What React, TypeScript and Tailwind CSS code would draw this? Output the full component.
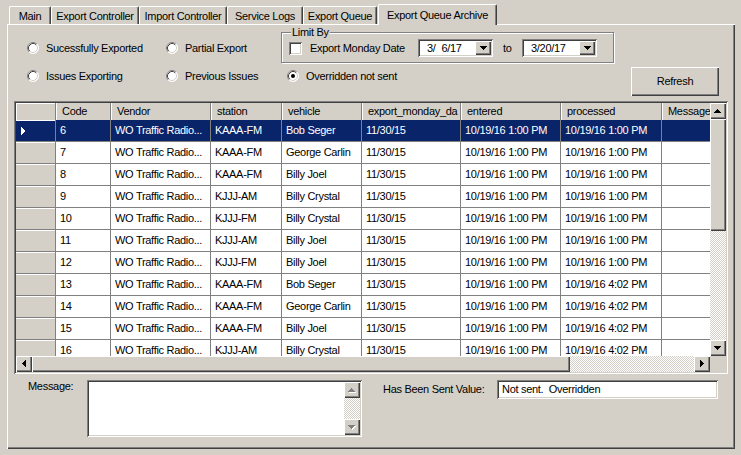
import React from "react";

const RAISED = "shadow-[inset_1px_1px_#ffffff,inset_-1px_-1px_#404040,inset_-2px_-2px_#808080]";
const SUNKEN = "shadow-[inset_1px_1px_#808080,inset_-1px_-1px_#ffffff,inset_2px_2px_#404040,inset_-2px_-2px_#d4d0c8]";
const DITHER = "bg-[image:repeating-conic-gradient(#ffffff_0%_25%,#d4d0c8_0%_50%)] bg-[length:2px_2px]";

const tabs = [
  { label: "Main", w: "w-[42px]" },
  { label: "Export Controller", w: "w-[88px]" },
  { label: "Import Controller", w: "w-[88px]" },
  { label: "Service Logs", w: "w-[76px]" },
  { label: "Export Queue", w: "w-[74px]" },
];

const cols = [
  { key: "code", label: "Code", w: "w-[55px]" },
  { key: "vendor", label: "Vendor", w: "w-[100px]" },
  { key: "station", label: "station", w: "w-[71px]" },
  { key: "vehicle", label: "vehicle", w: "w-[80px]" },
  { key: "monday", label: "export_monday_da", w: "w-[99px]" },
  { key: "entered", label: "entered", w: "w-[100px]" },
  { key: "processed", label: "processed", w: "w-[101px]" },
  { key: "message", label: "Message", w: "w-[90px]" },
];

type Row = Record<string, string>;

const mk = (code: string, station: string, vehicle: string, processed: string): Row => ({
  code,
  vendor: "WO Traffic Radio...",
  station,
  vehicle,
  monday: "11/30/15",
  entered: "10/19/16 1:00 PM",
  processed: `10/19/16 ${processed}`,
  message: "",
});

const rows: Row[] = [
  mk("6", "KAAA-FM", "Bob Seger", "1:00 PM"),
  mk("7", "KAAA-FM", "George Carlin", "1:00 PM"),
  mk("8", "KAAA-FM", "Billy Joel", "1:00 PM"),
  mk("9", "KJJJ-AM", "Billy Crystal", "1:00 PM"),
  mk("10", "KJJJ-FM", "Billy Crystal", "1:00 PM"),
  mk("11", "KJJJ-AM", "Billy Joel", "1:00 PM"),
  mk("12", "KJJJ-FM", "Billy Joel", "1:00 PM"),
  mk("13", "KAAA-FM", "Bob Seger", "4:02 PM"),
  mk("14", "KAAA-FM", "George Carlin", "4:02 PM"),
  mk("15", "KAAA-FM", "Billy Joel", "4:02 PM"),
  mk("16", "KJJJ-AM", "Billy Crystal", "4:02 PM"),
];

function Radio({ label, checked, w }: { label: string; checked?: boolean; w?: string }) {
  return (
    <div className={`flex items-center gap-[7px] h-[12px] ${w ?? ""}`}>
      <svg width="12" height="12" viewBox="0 0 12 12" className="shrink-0">
        <circle cx="6" cy="6" r="5.5" fill="#ffffff" />
        <path d="M2.11 9.89A5.5 5.5 0 0 1 9.89 2.11" stroke="#808080" fill="none" />
        <path d="M9.89 2.11A5.5 5.5 0 0 1 2.11 9.89" stroke="#ffffff" fill="none" />
        <path d="M2.82 9.18A4.5 4.5 0 0 1 9.18 2.82" stroke="#404040" fill="none" />
        <path d="M9.18 2.82A4.5 4.5 0 0 1 2.82 9.18" stroke="#d4d0c8" fill="none" />
        {checked && <circle cx="6" cy="6" r="2" fill="#000000" />}
      </svg>
      <span className="whitespace-nowrap">{label}</span>
    </div>
  );
}

function Arrow({ dir, disabled }: { dir: "up" | "down" | "left" | "right"; disabled?: boolean }) {
  const pts = {
    up: "3.5,0 7,4 0,4",
    down: "0,0 7,0 3.5,4",
    left: "4,0 4,7 0,3.5",
    right: "0,0 0,7 4,3.5",
  }[dir];
  const vertical = dir === "up" || dir === "down";
  return (
    <div className={`w-[16px] h-[16px] shrink-0 bg-[#d4d0c8] ${RAISED} flex items-center justify-center`}>
      <svg width={vertical ? 8 : 5} height={vertical ? 5 : 8} viewBox={vertical ? "0 0 8 5" : "0 0 5 8"} shapeRendering="crispEdges">
        {disabled && <polygon points={pts} fill="#ffffff" transform="translate(1,1)" />}
        <polygon points={pts} fill={disabled ? "#808080" : "#000000"} />
      </svg>
    </div>
  );
}

function DateBox({ value }: { value: string }) {
  return (
    <div className={`w-[75px] h-[18px] p-[2px] bg-white ${SUNKEN} flex shrink-0`}>
      <span className="flex-1 pl-[7px] flex items-center whitespace-pre">{value}</span>
      <div className={`w-[16px] h-[14px] bg-[#d4d0c8] ${RAISED} flex items-center justify-center`}>
        <svg width="7" height="4" viewBox="0 0 7 4" shapeRendering="crispEdges">
          <polygon points="0,0 7,0 3.5,4" fill="#000000" />
        </svg>
      </div>
    </div>
  );
}

function Tabs() {
  return (
    <div className="flex items-end h-[24px] pl-[9px]">
      {tabs.map((t) => (
        <div
          key={t.label}
          className={`${t.w} h-[18px] pt-[1px] shrink-0 flex items-center justify-center border-t border-l border-white border-r border-r-[#404040] rounded-tl-[2px] rounded-tr-[2px] shadow-[inset_-1px_0_#808080] whitespace-nowrap`}
        >
          {t.label}
        </div>
      ))}
      <div className="relative z-10 ml-[1px] -mb-[1px] w-[119px] h-[21px] shrink-0 bg-[#d4d0c8] flex items-center justify-center border-t border-l border-white border-r border-r-[#404040] rounded-tl-[2px] rounded-tr-[2px] shadow-[inset_-1px_0_#808080] whitespace-nowrap">
        Export Queue Archive
      </div>
    </div>
  );
}

function Grid() {
  return (
    <div className={`ml-[6px] w-[714px] h-[273px] p-[2px] ${SUNKEN} flex flex-col`}>
      <div className="flex h-[253px]">
        <div className="w-[694px] overflow-hidden bg-white">
          <div className="flex h-[17px] bg-[#d4d0c8]">
            <div className="w-[40px] shrink-0 border-r border-[#808080] shadow-[inset_1px_1px_#ffffff]" />
            {cols.map((c) => (
              <div
                key={c.key}
                className={`${c.w} shrink-0 pl-[6px] flex items-center border-r border-[#808080] shadow-[inset_1px_0_#ffffff] overflow-hidden whitespace-nowrap`}
              >
                {c.label}
              </div>
            ))}
          </div>
          {rows.map((r, i) => {
            const sel = i === 0;
            return (
              <div key={r.code} className={`flex h-[22px] ${sel ? "bg-[#0a246a] text-white" : "bg-white"}`}>
                <div
                  className={`w-[40px] shrink-0 border-r border-b border-[#808080] shadow-[inset_0_1px_#ffffff] flex items-center pl-[5px] ${
                    sel ? "bg-[#0a246a]" : "bg-[#d4d0c8]"
                  }`}
                >
                  {sel && (
                    <svg width="4" height="8" viewBox="0 0 4 8" shapeRendering="crispEdges">
                      <polygon points="0,0 4,4 0,8" fill="#ffffff" />
                    </svg>
                  )}
                </div>
                {cols.map((c) => (
                  <div
                    key={c.key}
                    className={`${c.w} shrink-0 pl-[4px] flex items-center border-r border-b border-[#808080] overflow-hidden whitespace-nowrap`}
                  >
                    {r[c.key]}
                  </div>
                ))}
              </div>
            );
          })}
        </div>
        <div className="w-[16px] flex flex-col">
          <Arrow dir="up" />
          <div className={`h-[112px] bg-[#d4d0c8] ${RAISED}`} />
          <div className={`flex-1 ${DITHER}`} />
          <Arrow dir="down" />
        </div>
      </div>
      <div className="flex h-[16px]">
        <Arrow dir="left" />
        <div className={`w-[538px] bg-[#d4d0c8] ${RAISED}`} />
        <div className={`flex-1 ${DITHER}`} />
        <Arrow dir="right" />
        <div className="w-[16px] bg-[#d4d0c8]" />
      </div>
    </div>
  );
}

export default function App() {
  return (
    <div className="w-[741px] h-[455px] bg-[#d4d0c8] overflow-hidden text-[11px] leading-[13px] tracking-[-0.3px] text-black font-['Liberation_Sans',Arial,sans-serif]">
      <Tabs />
      <div className="ml-[7px] w-[728px] h-[425px] border-t border-l border-white shadow-[inset_-1px_-1px_#404040,inset_-2px_-2px_#808080]">
        <div className="flex h-[76px]">
          <div className="w-[273px] pl-[19px] pt-[17px] flex flex-col gap-[16px]">
            <div className="flex">
              <Radio label="Sucessfully Exported" w="w-[139px]" />
              <Radio label="Partial Export" />
            </div>
            <div className="flex">
              <Radio label="Issues Exporting" w="w-[139px]" />
              <Radio label="Previous Issues" />
            </div>
          </div>
          <div className="w-[438px] flex flex-col">
            <div className="relative mt-[7px] w-[333px] h-[31px] border border-[#808080] shadow-[inset_1px_1px_#ffffff,1px_1px_#ffffff] flex items-center pl-[7px] pt-[1px]">
              <span className="absolute left-[9px] top-[-7px] px-[1px] bg-[#d4d0c8]">Limit By</span>
              <div className={`w-[13px] h-[13px] shrink-0 bg-white ${SUNKEN}`} />
              <span className="ml-[8px] w-[108px] shrink-0 whitespace-nowrap">Export Monday Date</span>
              <DateBox value={"3/\u20076/17"} />
              <span className="ml-[10px] w-[19px] shrink-0">to</span>
              <DateBox value="3/20/17" />
            </div>
            <div className="flex">
              <div className="ml-[6px] mt-[7px]">
                <Radio label="Overridden not sent" checked />
              </div>
              <div className={`ml-auto mt-[4px] w-[88px] h-[29px] bg-[#d4d0c8] ${RAISED} flex items-center justify-center`}>
                Refresh
              </div>
            </div>
          </div>
        </div>
        <Grid />
        <div className="flex mt-[6px] pl-[20px]">
          <span className="w-[59px] shrink-0 leading-[11px] pt-[1px]">Message:</span>
          <div className={`w-[275px] h-[57px] p-[2px] bg-white ${SUNKEN} flex justify-end shrink-0`}>
            <div className="w-[16px] flex flex-col">
              <Arrow dir="up" disabled />
              <div className={`flex-1 ${DITHER}`} />
              <Arrow dir="down" disabled />
            </div>
          </div>
          <span className="ml-[21px] w-[114px] h-[19px] flex items-center shrink-0 whitespace-nowrap">Has Been Sent Value:</span>
          <div className={`w-[221px] h-[19px] p-[2px] pl-[5px] bg-white ${SUNKEN} flex items-center whitespace-pre`}>
            Not sent.  Overridden
          </div>
        </div>
      </div>
    </div>
  );
}
